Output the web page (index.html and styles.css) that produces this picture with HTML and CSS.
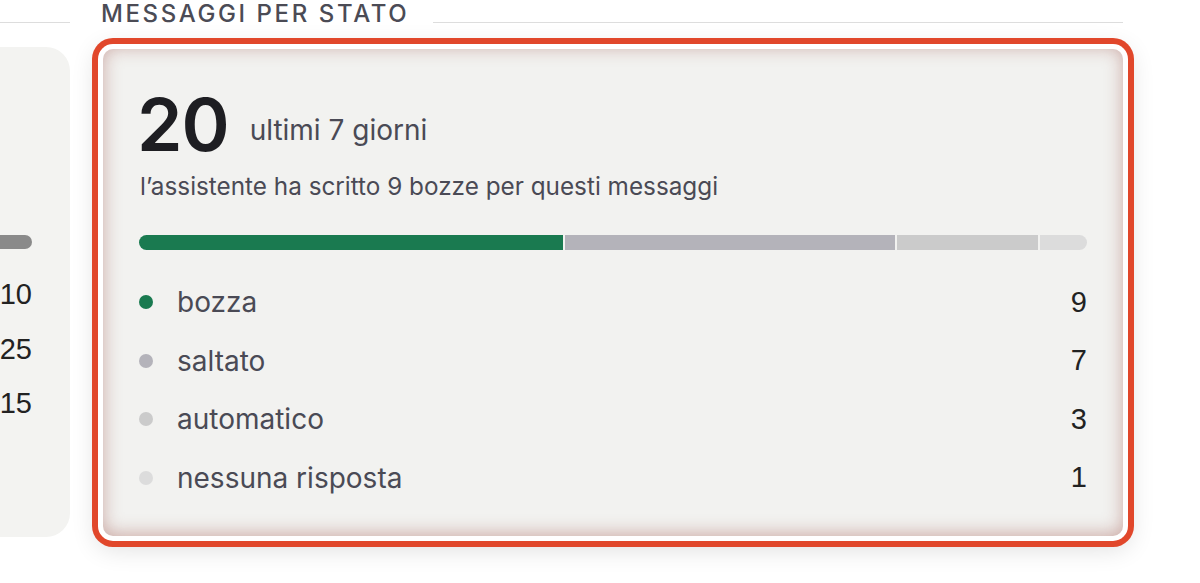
FILE: index.html
```html
<!DOCTYPE html>
<html lang="it">
  <head>
    <meta charset="UTF-8" />
    <meta name="viewport" content="width=device-width, initial-scale=1.0" />
    <title>Messaggi per stato</title>
    <link rel="stylesheet" href="styles.css">
  </head>
  <body>
    <div class="board">
      <section class="column column-side">
        <div class="column-head">
          <span class="rule"></span>
        </div>
        <div class="card side-card">
          <div class="side-bar"></div>
          <ul class="side-counts">
            <li>10</li>
            <li>25</li>
            <li>15</li>
          </ul>
        </div>
      </section>

      <section class="column column-main">
        <div class="column-head">
          <h2 class="column-title">Messaggi per stato</h2>
          <span class="rule"></span>
        </div>
        <div class="card status-card">
          <div class="total">
            <span class="total-value">20</span>
            <span class="total-period">ultimi 7 giorni</span>
          </div>
          <p class="total-note">l’assistente ha scritto 9 bozze per questi messaggi</p>

          <div class="stack-bar">
            <span class="seg seg-draft" style="flex: 9"></span>
            <span class="seg seg-skipped" style="flex: 7"></span>
            <span class="seg seg-auto" style="flex: 3"></span>
            <span class="seg seg-none" style="flex: 1"></span>
          </div>

          <ul class="legend">
            <li class="legend-row">
              <span class="dot seg-draft"></span>
              <span class="legend-label">bozza</span>
              <span class="legend-count">9</span>
            </li>
            <li class="legend-row">
              <span class="dot seg-skipped"></span>
              <span class="legend-label">saltato</span>
              <span class="legend-count">7</span>
            </li>
            <li class="legend-row">
              <span class="dot seg-auto"></span>
              <span class="legend-label">automatico</span>
              <span class="legend-count">3</span>
            </li>
            <li class="legend-row">
              <span class="dot seg-none"></span>
              <span class="legend-label">nessuna risposta</span>
              <span class="legend-count">1</span>
            </li>
          </ul>
        </div>
      </section>
    </div>
  </body>
</html>
```

FILE: styles.css
```css
body {
  margin: 0;
  min-height: 100vh;
  background-color: white;
  font-family: Inter, "Noto Sans", sans-serif;
  color: #4a4a55;
  overflow: hidden;
}
.board {
  display: flex;
  gap: 33px;
  margin-left: -230px;
  width: 1353px;
}
.column {
  display: flex;
  flex-direction: column;
  gap: 21px;
}
.column-side {
  width: 300px;
}
.column-main {
  flex: 1;
}
.column-head {
  display: flex;
  align-items: flex-end;
  height: 28px;
  gap: 24px;
}
.column-title {
  margin: 0 0 0 -2px;
  font-size: 24px;
  font-weight: 500;
  letter-spacing: 2.6px;
  text-transform: uppercase;
  line-height: 28px;
  color: #4b4b55;
}
.rule {
  flex: 1;
  height: 1px;
  margin-bottom: 5px;
  background-color: #dddddd;
}
.card {
  background-color: #f3f3f1;
  box-sizing: border-box;
  height: 487px;
}
.side-card {
  border-radius: 24px;
  padding: 188px 38px 0 0;
  margin-top: -2px;
  height: 490px;
}
.side-bar {
  height: 14px;
  border-radius: 0 7px 7px 0;
  background-color: #8a8a8a;
}
.side-counts {
  list-style: none;
  margin: 29px 0 0;
  padding: 0;
  text-align: right;
  font-family: "Liberation Sans", Arial, sans-serif;
  font-size: 29px;
  color: #222222;
}
.side-counts li {
  height: 54.5px;
}

/* status card with its focus ring */
.status-card {
  border-radius: 10px;
  padding: 39px 36px 0 37px;
  background-color: #f2f2f0;
  box-shadow:
    inset 0 -2px 18px rgba(150, 70, 60, 0.42),
    0 0 0 5px white,
    0 0 0 11px #e1472b,
    0 6px 24px 8px rgba(0, 0, 0, 0.12);
}
.total {
  display: flex;
  align-items: flex-start;
  gap: 21px;
}
.total-value {
  margin-left: -3px;
  font-size: 73px;
  font-weight: 600;
  line-height: 1;
  color: #1e1e22;
  letter-spacing: -1px;
}
.total-period {
  font-size: 28px;
  padding-top: 25px;
}
.total-note {
  margin: 10px 0 0;
  font-size: 24.3px;
}
.stack-bar {
  display: flex;
  gap: 2px;
  height: 15px;
  margin-top: 34px;
  margin-left: -1px;
  border-radius: 8px;
  overflow: hidden;
}
.seg {
  display: block;
}
.seg-draft {
  background-color: #1a7a50;
}
.seg-skipped {
  background-color: #b4b3ba;
}
.seg-auto {
  background-color: #cbcbcb;
}
.seg-none {
  background-color: #dcdcdc;
}
.legend {
  list-style: none;
  margin: 23px 0 0;
  padding: 0;
}
.legend-row {
  display: flex;
  align-items: center;
  height: 58.5px;
}
.dot {
  width: 14px;
  height: 14px;
  border-radius: 50%;
  margin-left: -1px;
  margin-right: 24px;
}
.legend-label {
  flex: 1;
  font-size: 28px;
}
.legend-count {
  font-family: "Liberation Sans", Arial, sans-serif;
  font-size: 29px;
  color: #222222;
}
```
